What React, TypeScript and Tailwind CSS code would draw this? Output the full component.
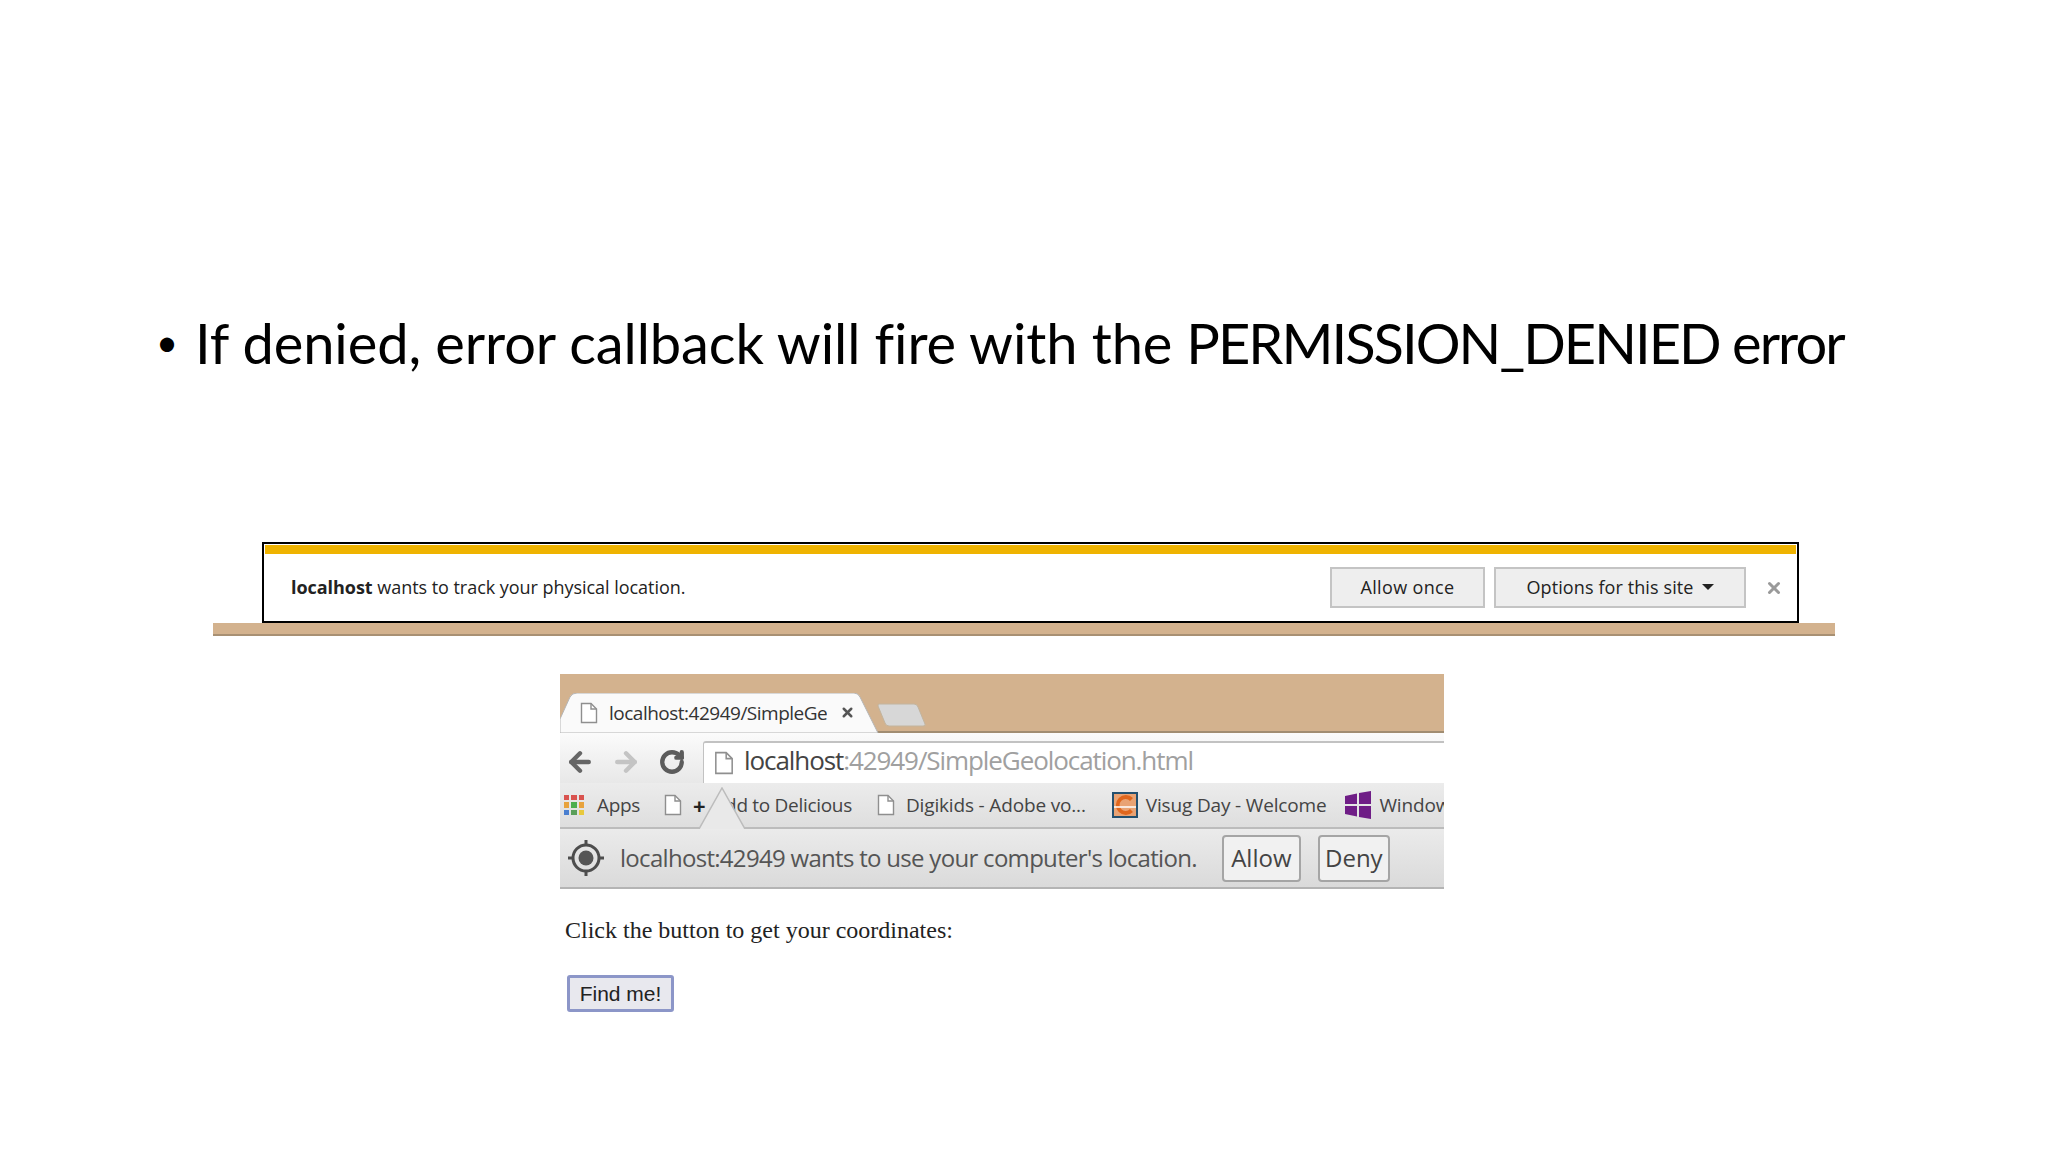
import { ArrowLeft, ArrowRight, RotateCw, X } from "lucide-react";

const uiFont = "font-['Open_Sans','Noto_Sans',sans-serif]";

const PageIcon = ({ className }: { className: string }) => (
  <svg viewBox="0 0 18 22" className={className} fill="none">
    <path d="M1.5 1.5h9.5l5.5 5.500v13.500h-15z" fill="#fff" stroke="#8f8f8f" strokeWidth="1.4" />
    <path d="M11 1.5v5.500h5.500" stroke="#8f8f8f" strokeWidth="1.4" />
  </svg>
);

const AppsIcon = () => (
  <div className="grid grid-cols-3 gap-[2px] w-[20px] h-[20px] shrink-0">
    {["#d9534f", "#d9534f", "#d9534f", "#e8a33d", "#4caf50", "#e8a33d", "#4a7fd0", "#5a9f5a", "#e8c93d"].map((c, i) => (
      <div key={i} style={{ backgroundColor: c }} />
    ))}
  </div>
);

const VisugIcon = () => (
  <svg viewBox="0 0 26 26" className="w-[26px] h-[26px] shrink-0">
    <rect width="26" height="26" fill="#24506f" />
    <rect x="2" y="2" width="22" height="22" fill="#e9a374" />
    <path d="M21 6a10 10 0 1 0 0 14l-3-3a6 6 0 1 1 0-8z" fill="#e0661c" />
    <path d="M2 15h22" stroke="#fff" strokeWidth="1.5" />
  </svg>
);

const WindowsIcon = () => (
  <svg viewBox="0 0 26 28" className="w-[26px] h-[28px] shrink-0">
    <path d="M0 5l12-2.500V13H0zM14 2l12-2v13H14zM0 15h12v10.500L0 23zM14 15h12v13l-12-2z" fill="#6f1d86" />
  </svg>
);

const TargetIcon = () => (
  <svg viewBox="0 0 38 38" className="w-[38px] h-[38px] shrink-0">
    <circle cx="19" cy="19" r="13" fill="none" stroke="#4d4d4d" strokeWidth="3" />
    <circle cx="19" cy="19" r="7.500" fill="#555" />
    <path d="M19 1v6M19 31v6M1 19h6M31 19h6" stroke="#4d4d4d" strokeWidth="3" />
  </svg>
);

const Banner = () => (
  <div className="ml-[213px] w-[1622px]">
    <div className="ml-[49px] w-[1537px] h-[81px] border-2 border-black bg-white flex flex-col">
      <div className="h-[9px] mt-[1px] mx-[1px] bg-[#efb300]" />
      <div className={`flex-1 flex items-center pl-[27px] pr-[14px] text-[18px] text-[#222] ${uiFont}`}>
        <p className="flex-1 tracking-[-0.04px]">
          <span className="font-bold">localhost</span> wants to track your physical location.
        </p>
        <button className="w-[155px] h-[41px] border-2 border-[#c4c4c4] bg-[#eeeeee] tracking-[0.35px]">Allow once</button>
        <button className="ml-[9px] w-[252px] h-[41px] border-2 border-[#c4c4c4] bg-[#eeeeee] flex items-center justify-center gap-[8px] tracking-[0.1px]">
          Options for this site
          <span className="w-0 h-0 border-x-[6px] border-x-transparent border-t-[6px] border-t-[#222] mb-[2px]" />
        </button>
        <X className="ml-[19px] w-[18px] h-[18px] text-[#9a9a9a]" strokeWidth={4} />
      </div>
    </div>
    <div className="h-[13px] bg-[#d3b28e] border-b-2 border-[#a89073]" />
  </div>
);

const BrowserShot = () => (
  <div className={`ml-[560px] w-[884px] overflow-hidden text-[#444] ${uiFont}`}>
    <div className="relative h-[59px] bg-[#d3b28e] border-b-2 border-[#a18d72]">
      <svg viewBox="0 0 320 40" className="absolute left-0 bottom-[-2px] w-[320px] h-[40px]">
        <path d="M0 26 L10 4 Q12 0 17 0 H294 Q298 0 300 4 L318 40 H0z" fill="#fafafa" stroke="#b5b5b5" strokeWidth="1" />
      </svg>
      <svg viewBox="0 0 50 24" className="absolute left-[317px] top-[29px] w-[50px] h-[24px]">
        <path d="M2 1h35q3 0 4 3l7 17q1 2-2 2H12q-3 0-4-3L1 3q0-2 1-2z" fill="#d7d7d7" stroke="#c2b49e" />
      </svg>
      <div className="absolute left-[20px] bottom-[4px] flex items-center">
        <PageIcon className="w-[18px] h-[22px] shrink-0" />
        <span className="ml-[11px] w-[218px] overflow-hidden whitespace-nowrap text-[19px] text-[#333] tracking-[-0.5px]">
          localhost:42949/SimpleGe
        </span>
        <X className="ml-[13px] w-[15px] h-[15px] text-[#555]" strokeWidth={4} />
      </div>
    </div>
    <div className="h-[50px] bg-gradient-to-b from-[#fbfbfb] to-[#e8e8e8] flex items-end">
      <div className="w-[143px] h-[42px] flex items-center pl-[5px]">
        <ArrowLeft className="w-[30px] h-[30px] text-[#666]" strokeWidth={3.5} />
        <ArrowRight className="ml-[16px] w-[30px] h-[30px] text-[#c4c4c4]" strokeWidth={3.5} />
        <RotateCw className="ml-[18px] w-[26px] h-[26px] text-[#5c5c5c]" strokeWidth={4} />
      </div>
      <div className="flex-1 h-[42px] bg-white border-t-2 border-l border-[#c2c2c2] rounded-tl-[3px] flex items-center pl-[10px]">
        <PageIcon className="w-[20px] h-[24px] shrink-0" />
        <span className="ml-[10px] mb-[5px] text-[26px] text-[#a0a0a0] tracking-[-1.08px] whitespace-nowrap">
          <span className="text-[#444]">localhost</span>:42949/SimpleGeolocation.html
        </span>
      </div>
    </div>
    <div className="relative h-[46px] bg-gradient-to-b from-[#ececec] to-[#dedede] border-b-2 border-[#bcbcbc] flex items-center text-[19px] whitespace-nowrap tracking-[-0.16px]">
      <div className="ml-[4px]"><AppsIcon /></div>
      <span className="ml-[13px] tracking-[-0.35px]">Apps</span>
      <PageIcon className="ml-[24px] w-[18px] h-[22px] shrink-0" />
      <span className="ml-[11px] font-bold text-[#222] text-[22px] leading-none">+</span>
      <span className="ml-[8px] tracking-[-0.3px]">Add to Delicious</span>
      <PageIcon className="ml-[25px] w-[18px] h-[22px] shrink-0" />
      <span className="ml-[11px]">Digikids - Adobe vo...</span>
      <div className="ml-[26px] shrink-0"><VisugIcon /></div>
      <span className="ml-[8px]">Visug Day - Welcome</span>
      <div className="ml-[19px] shrink-0"><WindowsIcon /></div>
      <span className="ml-[8px]">Windows</span>
      <svg viewBox="0 0 46 42" className="absolute left-[139px] bottom-[-2px] w-[46px] h-[42px]">
        <path d="M0 42 L23 1 L46 42z" fill="#e9e9e9" />
        <path d="M0 42 L23 1 L46 42" fill="none" stroke="#bcbcbc" strokeWidth="1.500" />
      </svg>
    </div>
    <div className="h-[60px] bg-gradient-to-b from-[#ebebeb] to-[#dadada] border-b-2 border-[#b4b4b4] flex items-center pl-[7px] text-[24px] text-[#555] whitespace-nowrap">
      <TargetIcon />
      <span className="ml-[15px] tracking-[-0.7px]">localhost:42949 wants to use your computer's location.</span>
      <button className="ml-[25px] w-[79px] h-[47px] rounded-[4px] border-2 border-[#a5a5a5] bg-[#f1f1f1] text-[#444]">Allow</button>
      <button className="ml-[17px] w-[72px] h-[47px] rounded-[4px] border-2 border-[#a5a5a5] bg-[#f1f1f1] text-[#444]">Deny</button>
    </div>
  </div>
);

const PageBody = () => (
  <div className="ml-[565px] mt-[24px]">
    <p className="font-['Liberation_Serif',serif] text-[24px] leading-[34px] text-[#222]">
      Click the button to get your coordinates:
    </p>
    <button className="mt-[28px] ml-[2px] w-[107px] h-[37px] rounded-[3px] border-[3px] border-[#8c96c8] bg-[#e8e8ee] font-['Liberation_Sans',sans-serif] text-[21px] leading-none text-[#222]">
      Find me!
    </button>
  </div>
);

export default function App() {
  return (
    <div className="w-[2048px] h-[1152px] bg-white overflow-hidden">
      <div className="pt-[308px] pl-[156px] h-[542px] flex font-['Lato',sans-serif] text-[56px] leading-[70px] text-black whitespace-nowrap">
        <span className="w-[39px] text-[38px] leading-[66px]">•</span>
        <span className="tracking-[-0.1px]">If denied, error callback will fire with the</span>
        <span className="ml-[14px] tracking-[-1.96px]">PERMISSION_DENIED error</span>
      </div>
      <Banner />
      <div className="h-[38px]" />
      <BrowserShot />
      <PageBody />
    </div>
  );
}
